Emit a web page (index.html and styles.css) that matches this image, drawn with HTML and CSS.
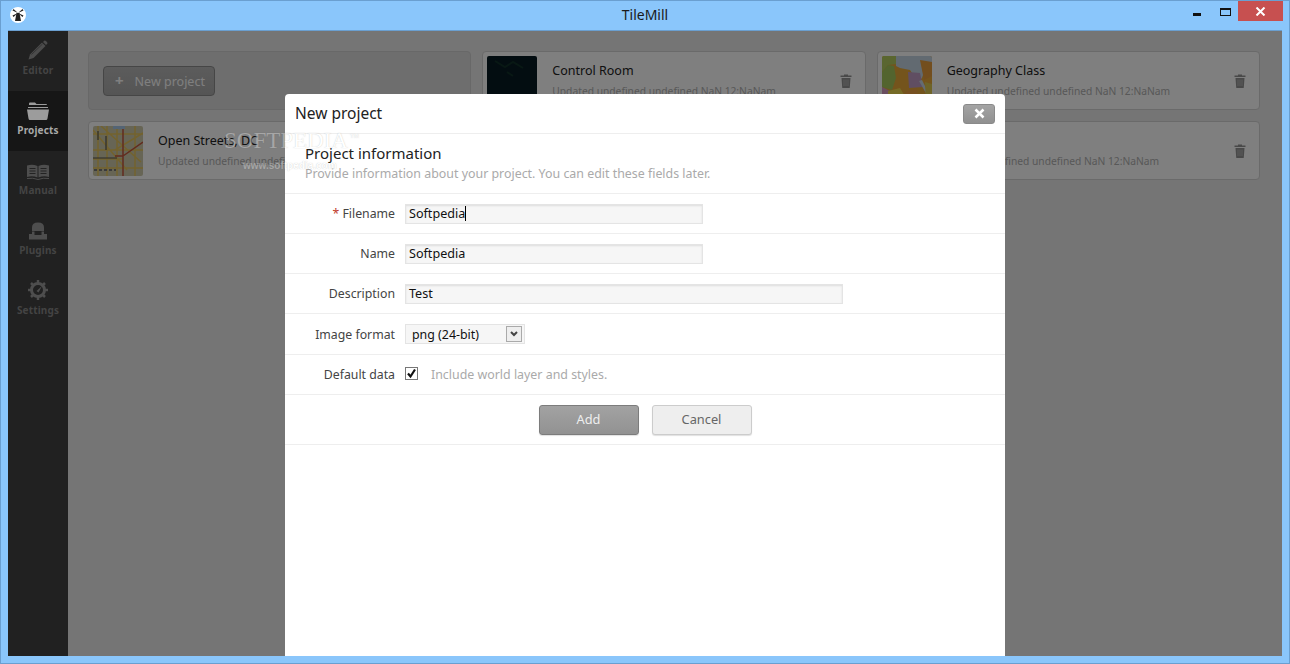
FILE: index.html
```html
<!DOCTYPE html>
<html lang="en">
<head>
<meta charset="UTF-8">
<title>TileMill</title>
<link rel="stylesheet" href="styles.css">
</head>
<body>

<svg class="defs" width="0" height="0">
  <symbol id="trash" viewBox="0 0 12 14">
    <path d="M4 1.500V.5h4v1h3.500V3H.5V1.500zM1.500 4h9l-.7 9.500q0 .5-.8.5H3q-.8 0-.8-.5z" fill="#929292"/>
    <path d="M4 5.500V12M6 5.500V12M8 5.500V12" stroke="#ffffff" stroke-opacity=".45" stroke-width=".8"/>
  </symbol>
</svg>

<!-- WINDOW CHROME -->
<div class="titlebar">
  <div class="app-icon">
    <svg width="12" height="14" viewBox="0 0 12 14"><path d="M4.500 5h3l1.500 8H3z" fill="#222"/><path d="M6 5 1.500 1 .5 2.500zM6 5l4.500-4 1 1.500zM6 5 1.500 9 .5 7.500zM6 5l4.500 4 1-1.500z" fill="#222"/></svg>
  </div>
  <div class="win-title">TileMill</div>
  <div class="win-buttons">
    <span class="win-min"></span>
    <span class="win-max"></span>
    <span class="win-close">
      <svg width="11" height="9" viewBox="0 0 11 9"><path d="M1.500 .5l8 8M9.500 .5l-8 8" stroke="#fff" stroke-width="2"/></svg>
    </span>
  </div>
</div>

<!-- APP -->
<div class="app">

  <div class="sidebar">
    <div class="nav-item">
      <svg width="20" height="20" viewBox="0 0 20 20"><path d="M16.500 .5q1 0 2 1t1 2l-1.500 1.500-3-3z" fill="#4c4c4c"/><path d="M14 2.500l3.500 3.500L5.500 18 .5 19.500 2 14.500z" fill="#4c4c4c"/><path d="M3.500 14.500 14.500 4" stroke="#2e2e2e" stroke-width=".8"/></svg>
      <span>Editor</span>
    </div>
    <div class="nav-item active">
      <svg width="22" height="18" viewBox="0 0 22 18"><path d="M2 3V1.500Q2 .5 3 .5h5l1.500 1.500h9.500q1 0 1 1z" fill="#9c9c9c"/><path d="M1 5h20v1H1z" fill="#9c9c9c"/><path d="M0 7.500h22l-1.500 9q-.2 1.500-1.500 1.500H3q-1.300 0-1.500-1.500z" fill="#9c9c9c"/></svg>
      <span>Projects</span>
    </div>
    <div class="nav-item">
      <svg width="22" height="16" viewBox="0 0 22 16"><path d="M0 1.500Q5.500 0 10.500 2v11.500Q5.500 11.500 0 13zM22 1.500Q16.500 0 11.500 2v11.500q5-2 10.500-.5z" fill="#4e4e4e"/><path d="M2.500 4.500h6M2.500 7h6M2.500 9.500h6M13.500 4.500h6M13.500 7h6M13.500 9.500h6" stroke="#232323"/><path d="M0 14.500q6-1 11 1 5-2 11-1" stroke="#4e4e4e" fill="none"/></svg>
      <span>Manual</span>
    </div>
    <div class="nav-item">
      <svg width="18" height="18" viewBox="0 0 18 18"><path d="M3 5.500Q3 .5 9 .5t6 5V9H3z" fill="#4e4e4e"/><path d="M0 12h3V9.500h2.500V13h7V9.500H15V12h3v5.500H0z" fill="#4e4e4e"/><path d="M6.500 9.500v3M11.500 9.500v3" stroke="#232323"/></svg>
      <span>Plugins</span>
    </div>
    <div class="nav-item">
      <svg width="20" height="20" viewBox="0 0 20 20"><circle cx="10" cy="10" r="6.500" fill="none" stroke="#4e4e4e" stroke-width="3"/><path d="M10 0v4M10 16v4M0 10h4M16 10h4M3 3l2.500 2.500M14.500 14.500 17 17M3 17l2.500-2.500M17 3l-2.500 2.500" stroke="#4e4e4e" stroke-width="2.500"/><path d="M8.500 11 14 6l-3.500 6.500z" fill="#4e4e4e"/></svg>
      <span>Settings</span>
    </div>
  </div>

  <div class="main">
    <div class="grid">
      <div class="new-box">
        <button class="new-btn"><b>+</b>New project</button>
      </div>

      <div class="card">
        <svg class="thumb" viewBox="0 0 50 50"><rect width="50" height="50" fill="#071a22"/><path d="M8 5l10 6 8-5 10 6M20 16l6 4" stroke="#103029" stroke-width="2" fill="none"/></svg>
        <div class="card-info">
          <h3>Control Room</h3>
          <p>Updated undefined undefined NaN 12:NaNam</p>
        </div>
        <svg class="trash"><use href="#trash"/></svg>
      </div>

      <div class="card">
        <svg class="thumb" viewBox="0 0 50 50"><rect width="50" height="50" fill="#e8a838"/><path d="M0 0h20L14 8 6 9 0 16z" fill="#b4cc60"/><path d="M0 16l6-7 6 1 2 12-4 12-10-3z" fill="#a6c85c"/><path d="M14 0h36v6l-6 4-4 12-4 4-8-12-10-2-4-2z" fill="#c4d4e2"/><path d="M26 16l12 1 3 14-14 1z" fill="#c09cc4"/><path d="M38 4l12 2v14l-8 4z" fill="#e69c3c"/><path d="M0 31l8 4-2 15H0z" fill="#d49cc0"/><path d="M6 35l12-3 6 10-4 8H6z" fill="#ecd64c"/><path d="M24 36l10-4 6 18H22z" fill="#eea040"/><path d="M40 24l10 20-1 2-12-21z" fill="#c8d8e4"/><path d="M43 26l7 2v22h-6z" fill="#dcc850"/></svg>
        <div class="card-info">
          <h3>Geography Class</h3>
          <p>Updated undefined undefined NaN 12:NaNam</p>
        </div>
        <svg class="trash"><use href="#trash"/></svg>
      </div>

      <div class="card">
        <svg class="thumb" viewBox="0 0 50 50"><rect width="50" height="50" fill="#cfcbaa"/><path d="M0 8h50M0 24h50M0 33h30M0 42h50M5 0v50M14 0v50M24 0v50M42 0v50M0 4l34 40M8 0l40 36M50 7 22 24" stroke="#e6c55c" stroke-width="1.500" fill="none"/><path d="M30 0v30h-8M30 30l20-14M30 30v20" stroke="#c4563c" stroke-width="1.500" fill="none"/><path d="M0 32h24M13 10v14M5 5v9" stroke="#555" stroke-width="1.200" fill="none"/><path d="M20 0h12v3H20z" fill="#a8c8e8"/><path d="M1 44h22" stroke="#777" stroke-dasharray="3 2" stroke-width="2"/></svg>
        <div class="card-info">
          <h3>Open Streets, DC</h3>
          <p>Updated undefined undefined NaN 12:NaNam</p>
        </div>
        <svg class="trash"><use href="#trash"/></svg>
      </div>

      <div class="card"></div>

      <div class="card">
        <div class="card-info card-info-end">
          <h3>&nbsp;</h3>
          <p>Updated undefined undefined NaN 12:NaNam</p>
        </div>
        <svg class="trash"><use href="#trash"/></svg>
      </div>
    </div>
  </div>

  <!-- MODAL -->
  <div class="overlay"></div>
  <div class="modal">
    <div class="modal-head">
      <h1>New project</h1>
      <button class="modal-close">
        <svg width="11" height="11" viewBox="0 0 11 11"><path d="M1.500 1.500l8 8M9.500 1.500l-8 8" stroke="#fff" stroke-width="2.500"/></svg>
      </button>
    </div>
    <div class="modal-intro">
      <h2>Project information</h2>
      <p>Provide information about your project. You can edit these fields later.</p>
    </div>
    <div class="row">
      <label><i>*</i> Filename</label>
      <div class="field">Softpedia<span class="caret"></span></div>
    </div>
    <div class="row">
      <label>Name</label>
      <div class="field">Softpedia</div>
    </div>
    <div class="row">
      <label>Description</label>
      <div class="field field-wide">Test</div>
    </div>
    <div class="row row-tall">
      <label>Image format</label>
      <div class="select">
        <span>png (24-bit)</span>
        <span class="select-arrow">
          <svg width="8" height="6" viewBox="0 0 8 6"><path d="M1 1l3 3 3-3" stroke="#444" stroke-width="2" fill="none"/></svg>
        </span>
      </div>
    </div>
    <div class="row">
      <label>Default data</label>
      <span class="check">
        <svg width="11" height="11" viewBox="0 0 11 11"><path d="M2 5.500l2.500 3L9 1.500" stroke="#111" stroke-width="2.200" fill="none"/></svg>
      </span>
      <span class="hint">Include world layer and styles.</span>
    </div>
    <div class="actions">
      <button class="btn btn-add">Add</button>
      <button class="btn">Cancel</button>
    </div>
  </div>

</div>

<!-- WATERMARK -->
<div class="mark">
  <div class="mark-name">SOFTPEDIA<sup>TM</sup></div>
  <div class="mark-url">www.softpedia.com</div>
</div>

</body>
</html>
```

FILE: styles.css
```css
*{
 box-sizing:border-box;
}

body{
 margin:0;
 width:1290px;
 height:664px;
 overflow:hidden;
 display:flex;
 flex-direction:column;
 background:#8ac6fb;
 border:1px solid #6a9fd0;
 font-family:'Noto Sans',sans-serif;
 font-size:12.4px;
 color:#333;
}

.defs{
 display:block;
}

/* WINDOW CHROME */
.titlebar{
 height:29px;
 flex:none;
 display:flex;
 align-items:flex-start;
 position:relative;
}

.app-icon{
 width:16px;
 height:16px;
 margin:6px 0 0 9px;
 border-radius:50%;
 background:#fff;
 display:flex;
 align-items:center;
 justify-content:center;
}

.win-title{
 position:absolute;
 left:0;
 right:0;
 top:4px;
 text-align:center;
 font-size:14px;
 line-height:20px;
 color:#1a1a1a;
}

.win-buttons{
 margin-left:auto;
 margin-right:6px;
 display:flex;
 align-items:flex-start;
}

.win-min{
 width:8px;
 height:3px;
 background:#111;
 margin:12px 19px 0 0;
}

.win-max{
 width:11px;
 height:8px;
 border:1px solid #111;
 border-top-width:2px;
 margin:7px 7px 0 0;
}

.win-close{
 width:45px;
 height:20px;
 background:#c75050;
 display:flex;
 align-items:center;
 justify-content:center;
}

/* APP */
.app{
 flex:1;
 margin:0 7px 7px;
 display:flex;
 position:relative;
 overflow:hidden;
 border-top:1px solid #6a9fd0;
 min-height:0;
}

.sidebar{
 width:60px;
 flex:none;
 background:#212121;
 position:relative;
 z-index:2;
}

.nav-item{
 height:60px;
 display:flex;
 flex-direction:column;
 align-items:center;
 justify-content:flex-end;
 padding-bottom:14px;
 color:#444;
 font-size:10px;
 font-weight:700;
 letter-spacing:.15px;
 line-height:13px;
}

.nav-item svg{
 margin-bottom:4px;
}

.nav-item.active{
 background:#161616;
 color:#a8a8a8;
}

.main{
 flex:1;
 background:#eaeaea;
 padding:20px 22px 0 20px;
}

.grid{
 display:grid;
 grid-template-columns:repeat(3,1fr);
 grid-auto-rows:59px;
 gap:11px;
}

.new-box{
 background:#dcdcdc;
 border:1px solid #d0d0d0;
 border-radius:4px;
 padding:14px;
 display:flex;
 align-items:center;
}

.new-btn{
 width:112px;
 height:30px;
 background:linear-gradient(#b8b8b8,#aaa);
 border:1px solid #8c8c8c;
 border-radius:4px;
 font:12.5px 'Noto Sans',sans-serif;
 line-height:26px;
 color:#fff;
 text-align:left;
 padding:0 0 4px 11px;
}

.new-btn b{
 margin-right:11px;
 font-size:15px;
}

.card{
 background:#fff;
 border:1px solid #d4d4d4;
 border-radius:4px;
 padding:4px 13px 4px 4px;
 display:flex;
 align-items:center;
}

.thumb{
 width:50px;
 height:50px;
 flex:none;
 border-radius:2px;
}

.card-info{
 flex:1;
 margin:-1px 0 0 15px;
 min-width:0;
}

.card-info-end{
 margin-left:54px;
}

.card h3{
 margin:0;
 font-size:12.5px;
 font-weight:400;
 line-height:18px;
 color:#222;
}

.card p{
 margin:4px 0 0;
 font-size:10.25px;
 line-height:15px;
 color:#b0b0b0;
 white-space:nowrap;
}

.trash{
 width:12px;
 height:14px;
 flex:none;
}

/* MODAL */
.overlay{
 position:absolute;
 left:0;
 top:0;
 right:0;
 bottom:0;
 background:rgba(0,0,0,.5);
}

.modal{
 position:absolute;
 left:277px;
 top:63px;
 bottom:0;
 width:720px;
 background:#fff;
 border-radius:4px 4px 0 0;
}

.modal-head{
 height:40px;
 padding:0 10px;
 display:flex;
 align-items:center;
 justify-content:space-between;
 border-bottom:1px solid #eee;
}

.modal-head h1{
 margin:0 0 2px;
 font-size:15.5px;
 font-weight:400;
 color:#222;
}

.modal-close{
 width:32px;
 height:20px;
 padding:0;
 background:linear-gradient(#a4a4a4,#909090);
 border:1px solid #8a8a8a;
 border-radius:3px;
 display:flex;
 align-items:center;
 justify-content:center;
}

.modal-intro{
 height:60px;
 padding:9px 20px 0;
 border-bottom:1px solid #eee;
}

.modal-intro h2{
 margin:0;
 font-size:15px;
 font-weight:400;
 line-height:20px;
 color:#222;
}

.modal-intro p{
 margin:2px 0 0;
 line-height:18px;
 color:#aaa;
}

.row{
 height:40px;
 display:flex;
 align-items:center;
 border-bottom:1px solid #eee;
 color:#444;
}

.row-tall{
 height:41px;
}

.row label{
 width:110px;
 text-align:right;
 margin-right:10px;
 font-size:12.3px;
}

.row label i{
 color:#c0392b;
 font-style:normal;
}

.field{
 width:298px;
 height:20px;
 background:#f6f6f6;
 border:1px solid #e4e4e4;
 box-shadow:inset 0 1px 2px #ddd;
 padding:0 3px;
 font-size:12.6px;
 line-height:18px;
 color:#111;
}

.field-wide{
 width:438px;
}

.caret{
 display:inline-block;
 width:1px;
 height:15px;
 background:#000;
 vertical-align:-3px;
}

.select{
 width:120px;
 height:20px;
 background:#f6f6f6;
 border:1px solid #e4e4e4;
 padding-left:6px;
 line-height:19px;
 color:#111;
 display:flex;
 justify-content:space-between;
}

.select-arrow{
 width:16px;
 height:16px;
 margin:1px 2px 1px 1px;
 background:#eee;
 border:1px solid #aaa;
 display:flex;
 align-items:center;
 justify-content:center;
}

.check{
 width:13px;
 height:13px;
 background:#fff;
 border:1px solid #777;
 display:flex;
 align-items:center;
 justify-content:center;
 margin-top:-3px;
}

.hint{
 margin-left:13px;
 color:#aaa;
}

.actions{
 height:50px;
 display:flex;
 justify-content:center;
 gap:13px;
 padding-top:10px;
 border-bottom:1px solid #eee;
}

.btn{
 width:100px;
 height:30px;
 padding:0 0 2px;
 font:12.8px 'Noto Sans',sans-serif;
 color:#666;
 background:#eee;
 border:1px solid #ccc;
 border-radius:3px;
 box-shadow:0 1px 1px #e0e0e0;
}

.btn-add{
 background:linear-gradient(#a2a2a2,#929292);
 border-color:#7c7c7c;
 color:#eee;
}

/* WATERMARK */
.mark{
 position:absolute;
 left:224px;
 top:128px;
 color:#fff;
 opacity:.3;
 text-shadow:0 0 1px #444;
 pointer-events:none;
}

.mark-name{
 font:23px 'Liberation Serif',serif;
 line-height:26px;
}

.mark-name sup{
 font:6px 'Liberation Sans',sans-serif;
 vertical-align:10px;
 margin-left:2px;
}

.mark-url{
 font:bold 10px 'Liberation Sans',sans-serif;
 margin:6px 0 0 19px;
}
```
